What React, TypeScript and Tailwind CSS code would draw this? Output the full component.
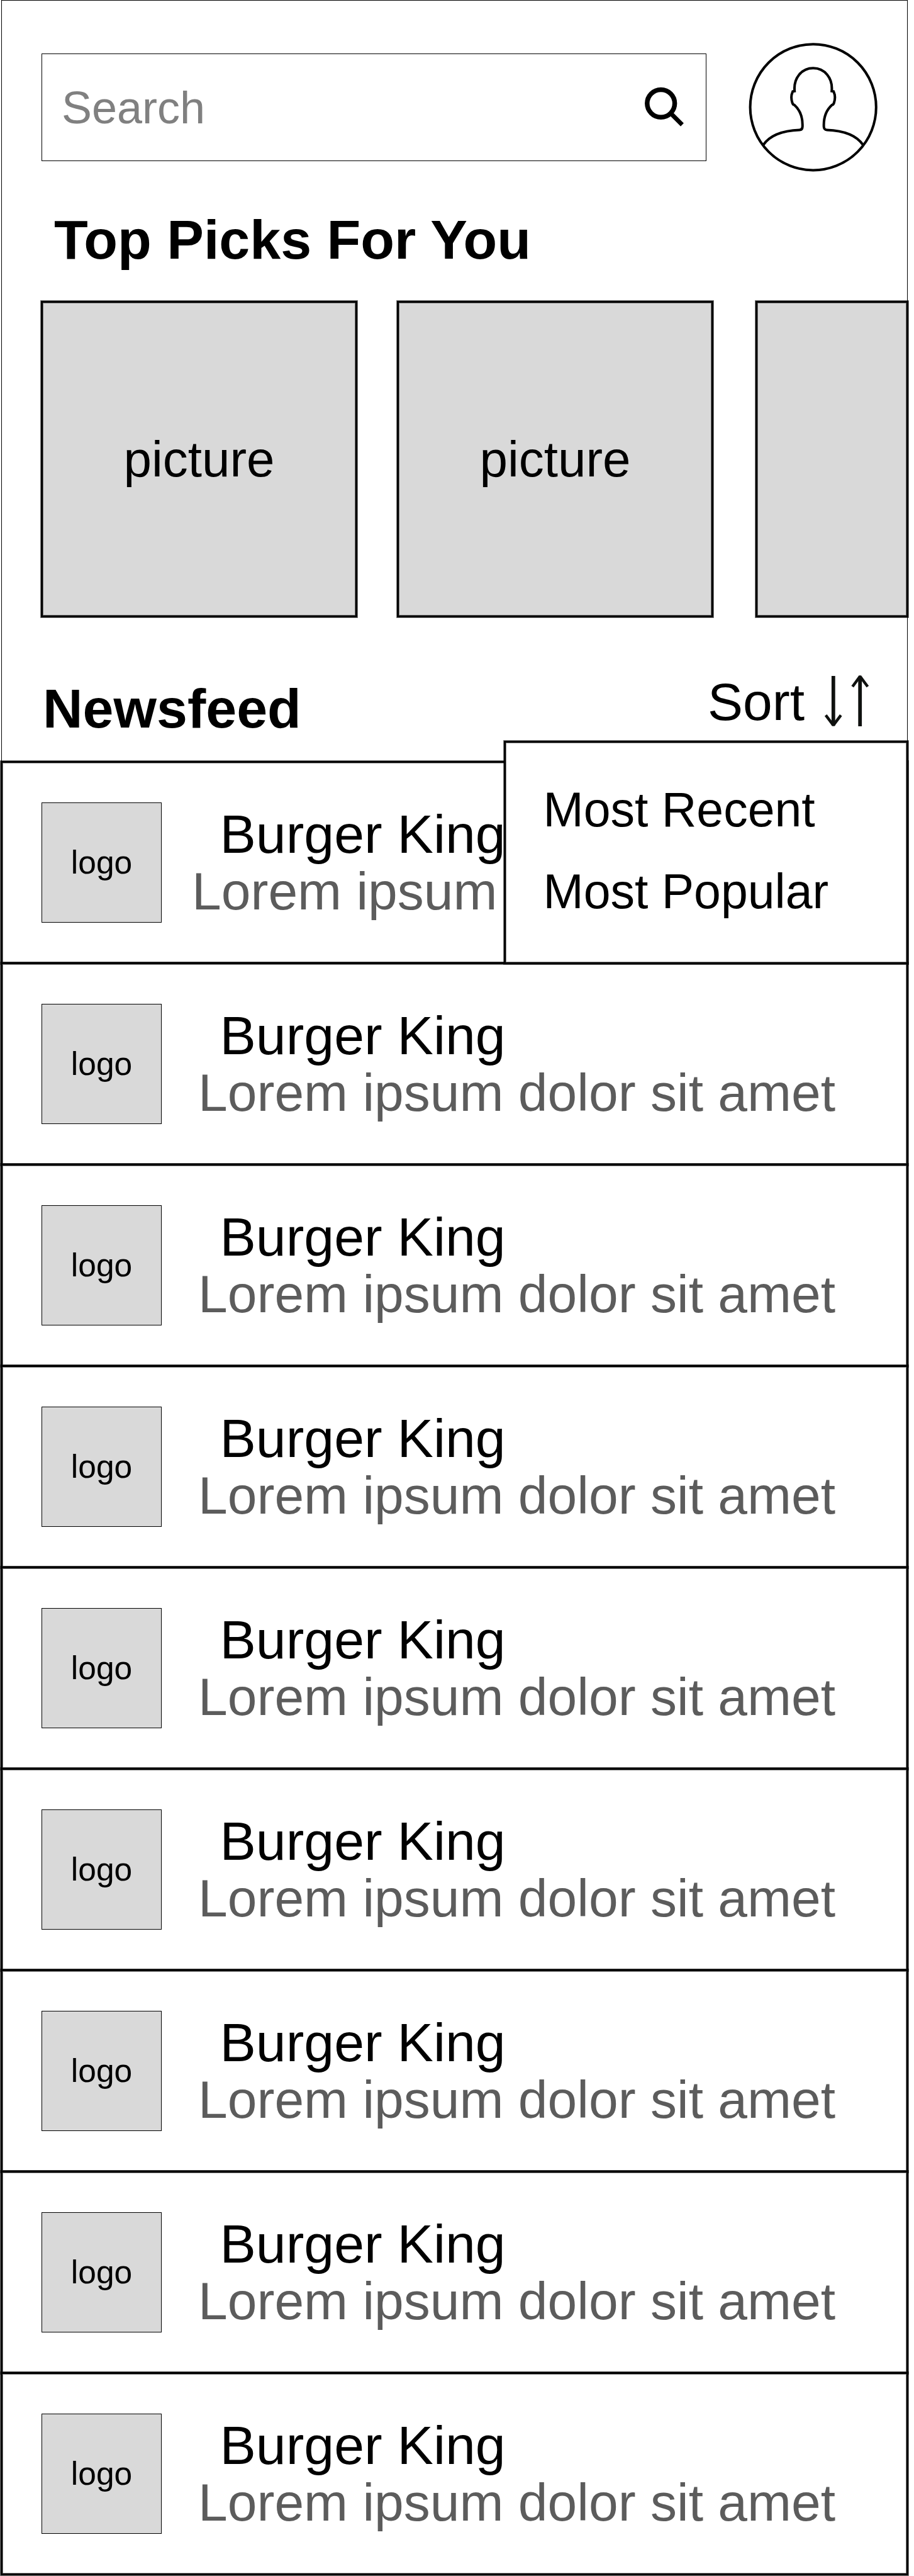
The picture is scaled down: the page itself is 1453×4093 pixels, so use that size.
import React from "react";

const EDGE = "border-[3px] border-black shadow-[0_0_0_1px_rgba(0,0,0,0.5),inset_0_0_0_1px_rgba(0,0,0,0.5)]";

const posts = [
  { name: "Burger King", text: "Lorem ipsum" },
  ...Array.from({ length: 8 }, () => ({ name: "Burger King", text: "Lorem ipsum dolor sit amet" })),
];

function SearchIcon() {
  return (
    <svg width="64" height="64" viewBox="0 0 64 64" fill="none" stroke="#000" className="mt-[52px] shrink-0 self-start">
      <circle cx="26.7" cy="26.3" r="21.9" strokeWidth="7.5" />
      <path d="M41.5 41.3 60.5 60.2" strokeWidth="7" />
    </svg>
  );
}

function Avatar() {
  return (
    <svg width="206" height="206" viewBox="0 0 206 206" fill="none" stroke="#000" strokeWidth="4" className="shrink-0">
      <circle cx="102.7" cy="102.3" r="100.1" />
      <path d="M23.3 162.3C33 148 53 139.5 81 138.4Q85.4 138.2 85.7 133.5C86.3 120 83 108 72.8 98.8Q70.6 98.4 69.6 95.5C67.4 89 67.8 82.5 70.2 77.3L73.2 76.8C71.2 56 84.5 40.3 102.7 40.3C120.9 40.3 134.2 56 132.2 76.8L135.2 77.3C137.6 82.5 138 89 135.8 95.5Q134.8 98.4 132.6 98.8C122.4 108 119.1 120 119.7 133.5Q120 138.2 124.4 138.4C152.4 139.5 172.4 148 182.1 162.3" />
    </svg>
  );
}

function SortIcon() {
  return (
    <svg width="76" height="84" viewBox="0 0 76 84" fill="none" stroke="#0f110f" strokeLinejoin="bevel" className="-mt-px shrink-0">
      <path d="M16.8 2V81" strokeWidth="5.8" />
      <path d="M4.7 64.3 16.8 80.4 28.8 64.3" strokeWidth="4.5" />
      <path d="M59.2 82V3" strokeWidth="5.8" />
      <path d="M47.2 19 59.2 2.7 71.4 19" strokeWidth="4.5" />
    </svg>
  );
}

function Picture({ label, width }: { label?: string; width: string }) {
  return (
    <div className={`${EDGE} ${width} h-[503px] shrink-0 bg-[#d9d9d9] pt-[208px] text-center text-[80px] leading-[81px]`}>
      {label}
    </div>
  );
}

function Post({ name, text, first }: { name: string; text: string; first: boolean }) {
  return (
    <article className={`${EDGE} flex h-[323px] bg-white pl-[62px] ${first ? "" : "-mt-[3px]"}`}>
      <div className="mt-[63px] size-[191px] shrink-0 border border-black bg-[#d9d9d9] pt-[68px] text-center text-[51.5px] leading-[52px]">
        logo
      </div>
      <div className={`pt-[70px] whitespace-nowrap ${first ? "ml-[48px]" : "ml-[58px]"}`}>
        <h3 className={`text-[86px] leading-[86px] ${first ? "pl-[44.5px]" : "pl-[34.5px]"}`}>{name}</h3>
        <p className="mt-[6px] text-[84px] leading-[84px] text-[#5c5c5c]">{text}</p>
      </div>
    </article>
  );
}

export default function App() {
  return (
    <div className="relative h-[4093px] w-[1453px] overflow-hidden bg-white font-['Liberation_Sans',Arial,sans-serif] text-black">
      <div className="ml-[2px] h-[1209px] w-[1441px] border-x border-t border-black">
        <header className="flex pl-[63px] pt-[67px]">
          <div className="mt-[17px] flex h-[171px] w-[1057px] items-center justify-between border border-black pl-[31px] pr-[34px]">
            <span className="pt-px text-[72px] leading-[72px] text-[#808080]">Search</span>
            <SearchIcon />
          </div>
          <div className="ml-[67px]">
            <Avatar />
          </div>
        </header>

        <h2 className="mt-[62px] pl-[83px] text-[88px] leading-[89px] font-bold">Top Picks For You</h2>

        <div className="mt-[53px] flex pl-[62px]">
          <Picture label="picture" width="w-[503px]" />
          <div className="w-[63px] shrink-0" />
          <Picture label="picture" width="w-[503px]" />
          <div className="w-[67px] shrink-0" />
          <Picture width="w-[243px]" />
        </div>

        <div className="flex items-start justify-between pl-[65px] pr-[58px] pt-[92px]">
          <h2 className="mt-[8px] text-[88px] leading-[89px] font-bold">Newsfeed</h2>
          <div className="flex gap-[29px]">
            <span className="text-[84px] leading-[84px]">Sort</span>
            <SortIcon />
          </div>
        </div>
      </div>

      <main className="relative ml-px w-[1443px]">
        {posts.map((p, i) => (
          <Post key={i} name={p.name} text={p.text} first={i === 0} />
        ))}
        <div className={`${EDGE} absolute -top-[32px] right-0 h-[355px] w-[643px] bg-white pt-[67px] pl-[59.5px] text-[77px] leading-[78px] whitespace-nowrap`}>
          <p>Most Recent</p>
          <p className="mt-[52px]">Most Popular</p>
        </div>
      </main>
    </div>
  );
}
